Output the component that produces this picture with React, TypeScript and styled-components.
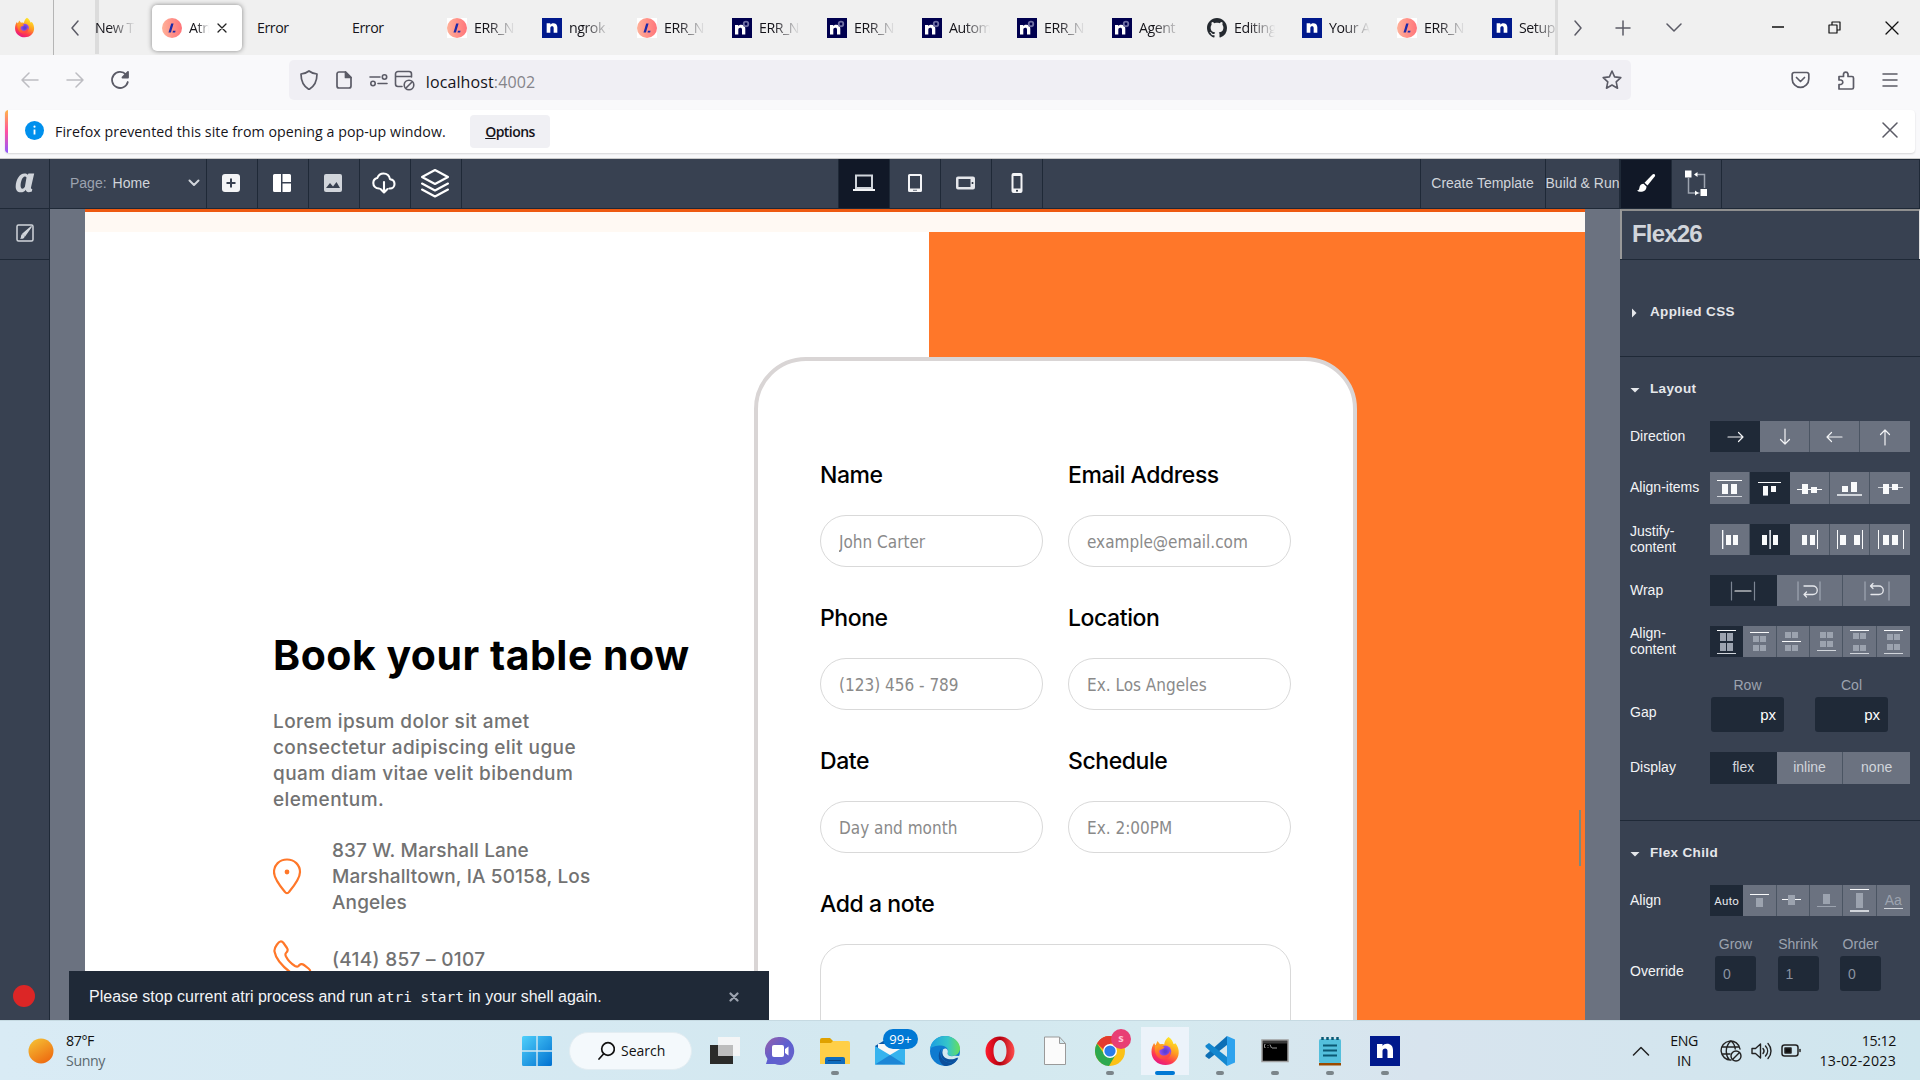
import React from "react";
import styled, { createGlobalStyle, css } from "styled-components";

const ui = `"Open Sans", "Noto Sans", sans-serif`;
const arial = `"Liberation Sans", Arial, sans-serif`;
const brand = `Inter, "Open Sans", sans-serif`;

const c = {
  bar: "#384151",
  line: "#1f2937",
  deep: "#111827",
  grey: "#6b7280",
  text: "#d1d5db",
  mute: "#9ca3af",
  orange: "#ff7729",
  body: "#727272",
};

const GlobalStyle = createGlobalStyle`
  * { box-sizing: border-box; }
  body { margin: 0; overflow: hidden; background: #fff; }
  svg { display: block; flex: none; }
`;

const Screen = styled.div`
  width: 1920px;
  height: 1080px;
  display: flex;
  flex-direction: column;
  overflow: hidden;
  font-family: ${arial};
`;

/* ---------- browser chrome ---------- */
const TabBar = styled.div`
  height: 55px;
  flex: none;
  display: flex;
  background: #f0f0f0;
  font-family: ${ui};
  color: #15141a;
`;
const Cell = styled.div<{ $w: number; $line?: string; $pr?: number }>`
  width: ${(p) => p.$w}px;
  flex: none;
  display: flex;
  align-items: center;
  justify-content: center;
  padding-right: ${(p) => p.$pr ?? 0}px;
  ${(p) => p.$line && css`border-right: 1px solid ${p.$line};`}
`;
const TabStrip = styled.div`
  width: 1464px;
  display: flex;
  gap: 5px;
  align-items: center;
  overflow: hidden;
  background: linear-gradient(#dcdcdc, #dcdcdc) 0 0 / 4px 54px no-repeat;
  border-right: 3px solid #dcdcdc;
`;
const Tab = styled.div<{ $active?: boolean; $w?: number }>`
  width: ${(p) => p.$w ?? 90}px;
  height: 46px;
  flex: none;
  display: flex;
  align-items: center;
  gap: 7px;
  padding-left: ${(p) => (p.$w ? 0 : 10)}px;
  border-radius: 5px;
  ${(p) => p.$active && css`background: #fff; box-shadow: 0 0 5px rgba(0, 0, 0, 0.45);`}
`;
const TabLabel = styled.span<{ $w: number; $fade?: boolean }>`
  width: ${(p) => p.$w}px;
  padding-top: 1px;
  overflow: hidden;
  white-space: nowrap;
  font-size: 14.2px;
  letter-spacing: -0.45px;
  line-height: 20px;
  ${(p) => p.$fade && css`mask-image: linear-gradient(90deg, #000 35%, transparent 98%);`}
`;
const NavBar = styled.div`
  height: 55px;
  flex: none;
  display: flex;
  padding: 5px 0 10px 7px;
  background: #f9f9fb;
`;
const UrlBar = styled.div`
  width: 1342px;
  height: 40px;
  margin: 0 146px 0 147px;
  flex: none;
  display: flex;
  align-items: center;
  border-radius: 5px;
  background: #f0eff4;
  padding-left: 2px;
`;
const Url = styled.span`
  flex: 1;
  padding: 3px 0 0 12px;
  font: 16px/22px ${ui};
  letter-spacing: 0.12px;
  color: #15141a;
`;
const Port = styled.span`
  color: #85848a;
`;
const NoticeArea = styled.div`
  height: 49px;
  flex: none;
  padding: 0 5px 5px;
  background: #f9f9fb;
  border-bottom: 1px solid #c9c9c9;
`;
const Notice = styled.div`
  height: 43px;
  display: flex;
  align-items: center;
  background: linear-gradient(#ffb545, #ff4fa0 50%, #9059ff) 0 0 / 3px 100% no-repeat #fff;
  border-radius: 4px;
  box-shadow: 0 1px 2px rgba(0, 0, 0, 0.14);
  padding: 0 0 1px 19px;
  font-family: ${ui};
  color: #15141a;
`;
const NoticeText = styled.span`
  width: 426px;
  padding: 1px 0 0 11px;
  font-size: 14.2px;
  letter-spacing: 0.06px;
  white-space: nowrap;
`;
const OptionsButton = styled.button`
  width: 80px;
  height: 33px;
  margin-right: auto;
  padding: 0;
  border: 0;
  border-radius: 4px;
  background: #f0f0f4;
  font: 600 14px ${ui};
  letter-spacing: -0.55px;
  color: #15141a;
`;

/* ---------- editor ---------- */
const Editor = styled.div`
  height: 861px;
  flex: none;
  display: flex;
  position: relative;
  background: ${c.bar};
`;
const Work = styled.div`
  width: 1620px;
  display: flex;
  flex-direction: column;
`;
const TopBar = styled.div`
  height: 50px;
  flex: none;
  display: flex;
  border-bottom: 1px solid ${c.line};
  color: ${c.text};
  font-size: 14px;
`;
const ToolCell = styled.div<{ $w?: number; $active?: boolean; $pr?: number }>`
  width: ${(p) => p.$w ?? 51}px;
  flex: none;
  display: flex;
  align-items: center;
  justify-content: center;
  padding: 0 ${(p) => p.$pr ?? 0}px 2px 0;
  white-space: nowrap;
  border-right: 1px solid ${c.line};
  background: ${(p) => (p.$active ? c.deep : "transparent")};
`;
const PageSelect = styled(ToolCell)`
  justify-content: flex-start;
  padding: 0 6px 2px 20px;
  gap: 6px;
`;
const Muted = styled.span`
  color: ${c.mute};
`;
const Grow = styled.span`
  flex: 1;
`;
const Spacer = styled.div<{ $w: number }>`
  width: ${(p) => p.$w}px;
  flex: none;
  border-right: 1px solid ${c.line};
`;
const Stage = styled.div`
  flex: 1;
  display: flex;
  min-height: 0;
`;
const Rail = styled.div`
  width: 50px;
  display: flex;
  flex-direction: column;
  align-items: center;
  justify-content: space-between;
  border-right: 1px solid ${c.line};
  padding-bottom: 13px;
`;
const RailTool = styled.div`
  width: 100%;
  height: 51px;
  display: flex;
  align-items: center;
  justify-content: center;
  padding-bottom: 2px;
  border-bottom: 1px solid ${c.line};
`;
const RecordDot = styled.div`
  width: 22px;
  height: 22px;
  margin-right: 1px;
  border-radius: 50%;
  background: #dc2626;
`;
const Canvas = styled.div`
  flex: 1;
  padding: 0 35px;
  background: ${c.grey};
`;
const SitePage = styled.div`
  height: 100%;
  overflow: hidden;
  border-top: 3px solid #ee5a10;
  background: #fff;
  position: relative;
`;
const Cream = styled.div`
  height: 20px;
  background: #fff9f3;
`;
const Booking = styled.div`
  height: 788px;
  display: flex;
  background: linear-gradient(90deg, #fff 844px, ${c.orange} 844px);
`;
const Intro = styled.div`
  width: 669px;
  flex: none;
  padding: 398px 0 0 188px;
  font-family: ${brand};
`;
const Title = styled.h1`
  margin: 0 0 29px;
  font-size: 41px;
  line-height: 50px;
  font-weight: 700;
  letter-spacing: 0.5px;
  white-space: nowrap;
  color: #000;
`;
const Copy = styled.p<{ $ls: number }>`
  margin: 0;
  font-size: 19px;
  line-height: 26px;
  font-weight: 500;
  letter-spacing: ${(p) => p.$ls}px;
  white-space: nowrap;
  color: ${c.body};
`;
const Contact = styled.div<{ $gap: number }>`
  display: grid;
  grid-template-columns: 59px 1fr;
  align-items: center;
  margin-top: ${(p) => p.$gap}px;
`;
const FormCard = styled.form`
  width: 603px;
  height: 760px;
  margin-top: 125px;
  flex: none;
  border: 4px solid #d9d5d5;
  border-radius: 52px;
  background: #fff;
  padding: 98px 62px 0;
  display: grid;
  grid-template-columns: 223px 223px;
  column-gap: 25px;
  row-gap: 35px;
  align-content: start;
`;
const Field = styled.label<{ $wide?: boolean }>`
  display: flex;
  flex-direction: column;
  gap: 24px;
  ${(p) => p.$wide && css`grid-column: 1 / 3;`}
`;
const FieldName = styled.span`
  font: 500 23px/32px ${brand};
  letter-spacing: -0.43px;
  color: #000;
`;
const Input = styled.input`
  width: 223px;
  height: 52px;
  padding: 2px 18px 1px;
  border: 1px solid #d9d9d9;
  border-radius: 26px;
  outline: 0;
  font-family: "DejaVu Sans Condensed", "DejaVu Sans", "Noto Sans", sans-serif;
  font-stretch: condensed;
  font-size: 17px;
  &::placeholder { color: #8a8a8a; opacity: 1; }
`;
const NoteBox = styled.div`
  height: 160px;
  border: 1px solid #d9d9d9;
  border-radius: 26px;
`;
const Marker = styled.div`
  position: absolute;
  left: 1494px;
  top: 598px;
  width: 2px;
  height: 56px;
  background: #738b86;
`;
const Toast = styled.div`
  position: absolute;
  left: 69px;
  bottom: 0;
  width: 700px;
  height: 49px;
  padding: 2px 30px 0 20px;
  display: flex;
  align-items: center;
  justify-content: space-between;
  background: ${c.line};
  color: #f3f4f6;
  font-size: 16px;
  white-space: pre;
`;
const Code = styled.code`
  font: 14.4px "DejaVu Sans Mono", monospace;
`;

/* ---------- properties panel ---------- */
const Panel = styled.div`
  width: 300px;
  display: flex;
  flex-direction: column;
  color: #f3f4f6;
  font-size: 14px;
`;
const PanelTabs = styled.div`
  height: 50px;
  flex: none;
  display: flex;
  border: 1px solid ${c.line};
`;
const NodeName = styled.div`
  height: 50px;
  flex: none;
  padding: 0 0 2px 10px;
  display: flex;
  align-items: center;
  border: 2px solid #999;
  border-top-color: #8f8f8f;
  border-right: 1px solid #ddd;
  border-bottom: 0;
  font-size: 24px;
  font-weight: 700;
  letter-spacing: -0.8px;
  color: ${c.text};
`;
const Section = styled.div<{ $h: number; $top: number }>`
  height: ${(p) => p.$h}px;
  flex: none;
  padding: ${(p) => p.$top}px 10px 0;
  border-top: 1px solid ${c.line};
`;
const SectionHead = styled.div`
  height: 20px;
  display: flex;
  align-items: center;
  gap: 10px;
  font-size: 13.5px;
  font-weight: 700;
  letter-spacing: 0.35px;
  color: #e5e7eb;
  & > svg { margin-top: 3px; }
`;
const Row = styled.div<{ $h?: number; $mt?: number }>`
  height: ${(p) => p.$h ?? 31}px;
  margin-top: ${(p) => p.$mt ?? 20}px;
  display: grid;
  grid-template-columns: 80px 200px;
  grid-template-rows: 100%;
  align-items: center;
  line-height: 16px;
`;
const RowLabel = styled.span<{ $top?: number }>`
  padding: ${(p) => p.$top ?? 0}px 0 2px;
`;
const Segments = styled.div<{ $n: number }>`
  height: 100%;
  display: grid;
  grid-template-columns: repeat(${(p) => p.$n}, minmax(0, 1fr));
`;
const Segment = styled.div<{ $on?: boolean; $last?: boolean }>`
  display: flex;
  align-items: center;
  justify-content: center;
  overflow: hidden;
  background: ${(p) => (p.$on ? c.line : c.grey)};
  border-right: ${(p) => (p.$on || p.$last ? 0 : 1)}px solid #4b5563;
  color: ${c.text};
  font-size: 14px;
`;
const AutoText = styled.span`
  font: 11.5px Roboto, ${arial};
  color: #e5e7eb;
  letter-spacing: 0.2px;
`;
const Underlined = styled.span`
  width: 19px;
  border-bottom: 1px solid ${c.text};
  color: ${c.mute};
  text-align: center;
  line-height: 15px;
`;
const NumCols = styled.div<{ $left: number; $gap: number }>`
  display: flex;
  gap: ${(p) => p.$gap}px;
  padding-left: ${(p) => p.$left}px;
`;
const NumCol = styled.div<{ $w: number }>`
  width: ${(p) => p.$w}px;
  display: flex;
  flex-direction: column;
  align-items: center;
  gap: 4px;
  color: ${c.mute};
`;
const NumBox = styled.div<{ $unit?: boolean }>`
  width: 100%;
  height: 35px;
  padding: ${(p) => (p.$unit ? "1px 8px 0 0" : "0 0 0 8px")};
  display: flex;
  align-items: center;
  justify-content: ${(p) => (p.$unit ? "flex-end" : "flex-start")};
  border-radius: 3px;
  background: ${c.line};
  color: ${(p) => (p.$unit ? "#fff" : "#8b93a1")};
  font-size: ${(p) => (p.$unit ? 15 : 14)}px;
`;

/* ---------- taskbar ---------- */
const Taskbar = styled.div`
  height: 60px;
  flex: none;
  display: flex;
  align-items: center;
  background: linear-gradient(90deg, #d9ebf5, #d3e8f0 45%, #d5eaf0 60%, #d8e4ee 74%, #cfe6ee);
  border-top: 1px solid #c6dae2;
  font-family: ${ui};
  color: #111;
`;
const Weather = styled.div`
  width: 509px;
  padding-left: 28px;
  display: flex;
  align-items: center;
  gap: 12px;
`;
const Stack = styled.div<{ $align?: string; $w?: number }>`
  display: flex;
  flex-direction: column;
  text-align: ${(p) => p.$align ?? "left"};
  width: ${(p) => (p.$w ? `${p.$w}px` : "auto")};
  font-size: 14.2px;
  line-height: 20px;
  letter-spacing: -0.4px;
`;
const DateText = styled.span`
  letter-spacing: 0.25px;
`;
const Soft = styled.span`
  color: #5b6870;
`;
const SearchPill = styled.div`
  width: 123px;
  height: 38px;
  margin: 0 5px 0 5px;
  display: flex;
  align-items: center;
  gap: 6px;
  padding-left: 28px;
  border-radius: 20px;
  background: #f4f9fc;
  border: 1px solid #e3edf2;
  font-size: 14px;
  letter-spacing: 0;
`;
const TaskItem = styled.div<{ $focus?: boolean }>`
  width: 55px;
  height: 48px;
  flex: none;
  position: relative;
  display: flex;
  align-items: center;
  justify-content: center;
  background: ${(p) => (p.$focus ? "linear-gradient(#ecf3fa,#ecf3fa) center / 48px 48px no-repeat" : "none")};
`;
const Indicator = styled.span<{ $focus?: boolean }>`
  position: absolute;
  bottom: 0;
  left: ${(p) => (p.$focus ? 17.5 : 23.5)}px;
  width: ${(p) => (p.$focus ? 20 : 8)}px;
  height: 4px;
  border-radius: 2px;
  background: ${(p) => (p.$focus ? "#0078d4" : "#7b858a")};
`;
const Badge = styled.span`
  position: absolute;
  left: 21px;
  top: 2px;
  width: 35px;
  height: 20px;
  border-radius: 10px;
  background: #0078d4;
  color: #fff;
  font-size: 13px;
  line-height: 20px;
  text-align: center;
`;
const Avatar = styled.span`
  position: absolute;
  left: 29px;
  top: 2px;
  width: 20px;
  height: 20px;
  border-radius: 50%;
  background: #e83e74;
  color: #ffc2d6;
  font-size: 11px;
  font-weight: 700;
  line-height: 18px;
  text-align: center;
`;
const Tray = styled.div`
  margin-left: auto;
  display: flex;
  align-items: center;
  padding-right: 24px;
`;

/* ---------- drawings ---------- */
type IconProps = { w: number; h?: number; vb?: string; color?: string; sw?: number; children: React.ReactNode };
const Icon = ({ w, h = w, vb, color = "#5b5b66", sw = 1.5, children }: IconProps) => (
  <svg width={w} height={h} viewBox={vb ?? `0 0 ${w} ${h}`} fill="none" stroke={color} strokeWidth={sw} strokeLinecap="round" strokeLinejoin="round">
    {children}
  </svg>
);

const Firefox = ({ size }: { size: number }) => (
  <svg width={size} height={size} viewBox="0 0 30 30">
    <defs>
      <linearGradient id="fxBody" x1="0.8" y1="0" x2="0.3" y2="1">
        <stop offset="0.1" stopColor="#ffe226" />
        <stop offset="0.45" stopColor="#ff9a22" />
        <stop offset="0.75" stopColor="#ff3a4f" />
        <stop offset="1" stopColor="#e31587" />
      </linearGradient>
      <linearGradient id="fxArm" x1="0" y1="0" x2="0.4" y2="1">
        <stop offset="0" stopColor="#ffae1e" />
        <stop offset="0.6" stopColor="#ff6a2e" />
        <stop offset="1" stopColor="#ff4548" />
      </linearGradient>
      <radialGradient id="fxGlobe">
        <stop offset="0.2" stopColor="#5b3fd6" />
        <stop offset="1" stopColor="#9a4ff0" />
      </radialGradient>
    </defs>
    <path d="M18.500 1c3 2 4.500 4.500 5 7 .9-.1 1.600-.4 2-.8 2.300 3 3.500 6.400 3.200 10C28.200 24.300 22.500 29 15.500 29 7.700 29 1.500 23.600 1.500 16c0-3.800 1-6.600 2.600-9l1.400 2.400L7.500 5l2.500 3.200c1.500-.4 3-.3 4.200.2C14.500 5.500 16 2.700 18.500 1z" fill="url(#fxBody)" />
    <circle cx="15.300" cy="15.500" r="6" fill="url(#fxGlobe)" />
    <path d="M5 10c3-1.500 7-1 9.500 1.500-1.500 2-3.500 1.500-5.500 3-.3 3.500 2.500 5.500 6 5 3-.5 4.500-2.500 4.800-4.500 2 4-1 8.500-6 8.500-6 0-9.800-5.500-8.800-13.500z" fill="url(#fxArm)" />
  </svg>
);

const LocalFav = () => (
  <svg width="20" height="20" viewBox="0 0 20 20">
    <defs>
      <linearGradient id="lf"><stop stopColor="#ffb199" /><stop offset="1" stopColor="#ff7479" /></linearGradient>
    </defs>
    <rect width="20" height="20" fill="#fff" />
    <circle cx="10" cy="10" r="10" fill="url(#lf)" />
    <path d="M9.200 5.500h2.400L8.900 14.500H6.500z" fill="#1b2aa8" />
    <path d="M11 12.700h2.600l-.5 1.800h-2.600z" fill="#1b2aa8" />
  </svg>
);
const NgrokMark = ({ size }: { size: number }) => (
  <svg width={size} height={size} viewBox="0 0 30 30">
    <rect width="30" height="30" fill="#00198c" />
    <path d="M7 8h5.500v2c1-1.500 2.500-2.300 4.500-2.300 3.700 0 6 2.300 6 6.300v8h-5.500v-7c0-1.700-.8-2.600-2.300-2.600-1.600 0-2.700 1-2.700 2.800V22H7z" fill="#fff" />
  </svg>
);
const AgentMark = () => (
  <svg width="20" height="20" viewBox="0 0 20 20">
    <rect width="20" height="20" fill="#00004f" />
    <path d="M3 7h3.300v1.200c.8-1 1.700-1.400 3-1.400 2.500 0 4 1.500 4 4V16.500H10v-5c0-1.200-.6-1.800-1.700-1.800-1.200 0-2 .8-2 2v4.800H3z" fill="#fff" />
    <circle cx="14" cy="6" r="2.300" fill="none" stroke="#6f6fa3" strokeWidth="1.800" />
  </svg>
);
const GithubMark = () => (
  <svg width="20" height="20" viewBox="0 0 16 16">
    <path fill="#24292f" d="M8 0C3.580 0 0 3.580 0 8c0 3.540 2.290 6.530 5.470 7.590.4.070.55-.17.55-.38 0-.19-.01-.82-.01-1.490-2.010.37-2.530-.49-2.690-.94-.09-.23-.48-.94-.82-1.130-.28-.15-.68-.52-.01-.53.63-.01 1.080.58 1.230.82.72 1.210 1.870.87 2.330.66.070-.52.28-.87.51-1.070-1.780-.2-3.640-.89-3.640-3.950 0-.87.31-1.590.82-2.150-.08-.2-.36-1.020.08-2.120 0 0 .67-.21 2.200.82.64-.18 1.320-.27 2-.27s1.360.09 2 .27c1.530-1.040 2.200-.82 2.200-.82.44 1.100.16 1.920.08 2.120.51.56.82 1.270.82 2.150 0 3.070-1.870 3.750-3.650 3.950.29.25.54.73.54 1.480 0 1.070-.01 1.930-.01 2.200 0 .21.15.46.55.38A8.010 8.010 0 0 0 16 8c0-4.420-3.580-8-8-8z" />
  </svg>
);

const tabs: [string, string][] = [
  ["l", "ERR_NG"], ["n", "ngrok -"], ["l", "ERR_NG"], ["a", "ERR_NG"], ["a", "ERR_NG"], ["a", "Automa"],
  ["a", "ERR_NG"], ["a", "Agent I"], ["g", "Editing"], ["n", "Your Au"], ["l", "ERR_NG"], ["n", "Setup"],
];
const favicon: Record<string, React.ReactNode> = {
  l: <LocalFav />,
  n: <NgrokMark size={20} />,
  a: <AgentMark />,
  g: <GithubMark />,
};

/* Bars and guide lines inside a layout option button: [x, y, width, height, tone] */
type Box = [number, number, number, number, string?];
const Glyph = ({ w, boxes }: { w: number; boxes: Box[] }) => (
  <svg width={w} height="31" viewBox={`0 0 ${w} 31`} shapeRendering="crispEdges">
    {boxes.map(([x, y, bw, bh, f], i) => (
      <rect key={i} x={x} y={y} width={bw} height={bh} fill={f ?? "#f9fafb"} />
    ))}
  </svg>
);
const D = "#9ca3af";
const L = "#d1d5db";

const alignItems: Box[][] = [
  [[7, 7, 25, 1], [7, 23, 25, 1, L], [12, 11, 6, 10], [21, 11, 6, 10]],
  [[8, 9, 23, 1], [13, 13, 5, 9], [13, 22, 5, 1, D], [21, 13, 5, 6]],
  [[7, 16, 25, 1], [12, 11, 6, 10], [21, 14, 6, 6]],
  [[7, 21, 25, 2, L], [12, 13, 6, 6], [21, 9, 6, 10]],
  [[8, 14, 25, 1, L], [13, 11, 6, 10], [22, 11, 6, 6]],
];
const justify: Box[][] = [
  [[11, 6, 1, 19], [12, 6, 1, 19, D], [15, 11, 5, 10], [22, 11, 5, 10]],
  [[18, 6, 1, 19, D], [19, 6, 1, 19, L], [11, 11, 5, 10], [22, 11, 5, 10]],
  [[11, 11, 5, 10], [19, 11, 5, 10], [26, 6, 1, 19]],
  [[6, 6, 1, 19], [9, 11, 6, 10], [23, 11, 6, 10], [31, 6, 1, 19]],
  [[7, 6, 1, 19], [12, 11, 6, 10], [21, 11, 6, 10], [32, 6, 1, 19]],
];
const quad = (y1: number, y2: number, h = 6, x = 10): Box[] => [
  [x, y1, 6, h, D], [x + 7, y1, 6, h, D], [x, y2, 6, h, D], [x + 7, y2, 6, h, D],
];
const alignContent: Box[][] = [
  [[7, 4, 19, 1], [7, 27, 19, 1, L], ...quad(7, 17, 8)],
  [[7, 6, 19, 1], ...quad(10, 19)],
  [[6, 15, 19, 1], ...quad(6, 19, 6, 9)],
  [[7, 24, 19, 1, L], ...quad(6, 15)],
  [[7, 4, 19, 1], [7, 27, 19, 1, L], ...quad(7, 19)],
  [[7, 4, 19, 1], [7, 27, 19, 1, L], ...quad(8, 18)],
];
const alignSelf: Box[][] = [
  [[7, 9, 19, 1], [13, 13, 7, 9, D]],
  [[6, 14, 19, 1], [12, 10, 7, 10, D]],
  [[7, 21, 19, 1, D], [13, 9, 7, 10, D]],
  [[7, 4, 19, 1], [7, 25, 19, 2, L], [13, 8, 7, 15, D]],
];
const arrows = ["M5 12h15M15.500 7.500L20 12l-4.500 4.500", "M12 4v15M7.500 14.500L12 19l4.500-4.500", "M19 12H4M8.500 7.500L4 12l4.500 4.500", "M12 20V5M7.500 9.500L12 5l4.500 4.500"];

const GlyphRow = ({ label, sets, on, h, w }: { label: string; sets: Box[][]; on: number; h?: number; w: number }) => (
  <Row $h={h}>
    <RowLabel>{label}</RowLabel>
    <Segments $n={sets.length}>
      {sets.map((b, i) => (
        <Segment key={i} $on={i === on} $last={i === sets.length - 1}>
          <Glyph w={w} boxes={b} />
        </Segment>
      ))}
    </Segments>
  </Row>
);

const Caret = ({ open }: { open?: boolean }) => (
  <svg width="10" height="10" viewBox="0 0 10 10">
    <path d={open ? "M.5 3h9L5 7.500z" : "M2 .5l4.500 4.500L2 9.500z"} fill="#e5e7eb" />
  </svg>
);

const fields = [
  ["Name", "John Carter"], ["Email Address", "example@email.com"],
  ["Phone", "(123) 456 - 789"], ["Location", "Ex. Los Angeles"],
  ["Date", "Day and month"], ["Schedule", "Ex. 2:00PM"],
];

const BrowserChrome = () => (
  <>
    <TabBar>
      <Cell $w={54} $line="#b5b5b5" $pr={4}><Firefox size={21} /></Cell>
      <Cell $w={41}><Icon w={10} h={18}><path d="M8 2L2 9l6 7" /></Icon></Cell>
      <TabStrip>
        <Tab $w={52}><TabLabel $w={41} $fade>New Ta</TabLabel></Tab>
        <Tab $active>
          <LocalFav />
          <TabLabel $w={21} $fade>Atri Ed</TabLabel>
          <Icon w={10} color="#222" sw={1.300}><path d="M1 1l8 8M9 1L1 9" /></Icon>
        </Tab>
        <Tab><TabLabel $w={70}>Error</TabLabel></Tab>
        <Tab><TabLabel $w={70}>Error</TabLabel></Tab>
        {tabs.map(([f, t], i) => (
          <Tab key={i}>{favicon[f]}<TabLabel $w={42} $fade>{t}</TabLabel></Tab>
        ))}
      </TabStrip>
      <Cell $w={40}><Icon w={10} h={18}><path d="M2 2l6 7-6 7" /></Icon></Cell>
      <Cell $w={50}><Icon w={16}><path d="M8 1v14M1 8h14" /></Icon></Cell>
      <Cell $w={101} $pr={50}><Icon w={16} h={10}><path d="M1 1l7 7 7-7" /></Icon></Cell>
      <Cell $w={57}><Icon w={12} h={12} color="#111" sw={1.300}><path d="M0 5h12" /></Icon></Cell>
      <Cell $w={57}><Icon w={13} color="#111" sw={1.200}><path d="M1 4h8v8H1zM4 4V1h8v8H9" /></Icon></Cell>
      <Cell $w={57}><Icon w={14} color="#111" sw={1.300}><path d="M1 1l12 12M13 1L1 13" /></Icon></Cell>
    </TabBar>
    <NavBar>
      <Cell $w={45}><Icon w={18} h={16} color="#bdbdc2"><path d="M17 8H1M8 1L1 8l7 7" /></Icon></Cell>
      <Cell $w={45}><Icon w={18} h={16} color="#bdbdc2"><path d="M1 8h16M10 1l7 7-7 7" /></Icon></Cell>
      <Cell $w={45}>
        <Icon w={20} sw={1.800}><path d="M17.800 12A8 8 0 1 1 16 4.600" /><path d="M18 2v5.500h-5.500z" fill="#5b5b66" /></Icon>
      </Cell>
      <UrlBar>
        <Cell $w={36}><Icon w={20} sw={1.700}><path d="M10 1c2 1.700 4.500 2.600 8 3 0 7-2 12-8 15.500C4 16 2 11 2 4c3.500-.4 6-1.300 8-3z" /></Icon></Cell>
        <Cell $w={34}><Icon w={16} h={18} sw={1.700}><path d="M3 1h6.500L15 6.500V15a2 2 0 0 1-2 2H3a2 2 0 0 1-2-2V3a2 2 0 0 1 2-2z" /><path d="M9.500 1v5.500H15z" fill="#5b5b66" /></Icon></Cell>
        <Cell $w={35}><Icon w={20} h={14} sw={1.600}><path d="M1 4h10M9 10.500h9" /><circle cx="15.500" cy="4" r="2.200" /><circle cx="4" cy="10.500" r="2.200" /></Icon></Cell>
        <Cell $w={16}><Icon w={21} sw={1.600}><path d="M8 16.500H4a2.500 2.500 0 0 1-2.500-2.500V4A2.500 2.500 0 0 1 4 1.500h11A2.500 2.500 0 0 1 17.500 4v3M2 6.500h15" /><circle cx="15" cy="15" r="4.800" /><path d="M12 18l6-6" /></Icon></Cell>
        <Url style={undefined}>&#8202;localhost<Port>:4002</Port></Url>
        <Cell $w={39}><Icon w={20} sw={1.600}><path d="M10 1l2.600 5.900 6.200.7-4.600 4.300 1.300 6.300L10 15l-5.500 3.200 1.300-6.300L1.200 7.600l6.200-.7z" /></Icon></Cell>
      </UrlBar>
      <Cell $w={46}><Icon w={19} h={18} sw={1.700}><path d="M3 1.500h13A1.800 1.800 0 0 1 17.800 3.300V8a8.300 8.300 0 0 1-16.600 0V3.300A1.800 1.800 0 0 1 3 1.500zM5.500 6.500l4 4 4-4" /></Icon></Cell>
      <Cell $w={45}><Icon w={18} h={20} sw={1.700}><path d="M2 6.500h4.500V4a2.300 2.300 0 0 1 4.500 0v2.500h4a1.500 1.500 0 0 1 1.500 1.500v9.500A1.500 1.500 0 0 1 15 19H2v-4.500h2a2.300 2.300 0 0 0 0-4.500H2z" /></Icon></Cell>
      <Cell $w={44}><Icon w={16}><path d="M1 2h14M1 8h14M1 14h14" /></Icon></Cell>
    </NavBar>
    <NoticeArea>
      <Notice>
        <svg width="20" height="20" viewBox="0 0 20 20"><circle cx="10.500" cy="9.500" r="9.500" fill="#0090ed" /><path d="M10.500 8.500v5" stroke="#fff" strokeWidth="1.800" /><circle cx="10.500" cy="5.700" r="1.100" fill="#fff" /></svg>
        <NoticeText>Firefox prevented this site from opening a pop-up window.</NoticeText>
        <OptionsButton><u>O</u>ptions</OptionsButton>
        <Cell $w={50}><Icon w={16} h={18}><path d="M1 1l14 14M15 1L1 15" /></Icon></Cell>
      </Notice>
    </NoticeArea>
  </>
);

const EditorTop = () => (
  <TopBar>
    <ToolCell $w={50}>
      <svg width="20" height="20" viewBox="0 0 20 20">
        <path fillRule="evenodd" fill={c.text} d="M13.500 0.500h5.700L16 14.500c-.2 1 .2 1.600 1.300 1.400l-.4 2.500c-3.600 1.500-6 .7-6-1.700-1.500 1.800-3.200 2.700-5.200 2.600C2.500 19.200.5 17 .7 13.200 1 6.500 4.500.5 9.500.4c1.500 0 2.500.4 3.200 1.300zM11.500 4.500c-.5-.8-1-1.100-1.700-1.100C7.500 3.500 5.600 8.500 5.600 12.500c0 2 .6 3.200 1.700 3.200 1 0 1.900-.7 2.600-2z" />
      </svg>
    </ToolCell>
    <PageSelect $w={157}>
      <Muted>Page:</Muted><span>Home</span><Grow />
      <Icon w={12} h={8} color={c.text} sw={2}><path d="M1.500 1.500L6 6l4.500-4.500" /></Icon>
    </PageSelect>
    <ToolCell $pr={2}>
      <svg width="18" height="18" viewBox="0 0 18 18"><rect width="18" height="18" rx="3" fill="#f3f4f6" /><path d="M9 4.500v9M4.500 9h9" stroke={c.bar} strokeWidth="2" /></svg>
    </ToolCell>
    <ToolCell $pr={2}>
      <svg width="18" height="18" viewBox="0 0 18 18" fill="#fff"><path d="M1.500 0H8v18H1.500A1.500 1.500 0 0 1 0 16.500v-15A1.500 1.500 0 0 1 1.500 0zM9.500 0h7A1.500 1.500 0 0 1 18 1.500V8H9.500zM9.500 9.500H18v7a1.500 1.500 0 0 1-1.500 1.500h-7z" /></svg>
    </ToolCell>
    <ToolCell $pr={2}>
      <svg width="18" height="18" viewBox="0 0 18 18"><rect width="18" height="18" rx="2" fill={c.text} /><path d="M2 14l4-5 3 3.500L12.500 8 16 14z" fill={c.bar} /></svg>
    </ToolCell>
    <ToolCell $pr={2}>
      <Icon w={24} h={22} color="#fff" sw={2.100}><path d="M7 16.500C3.500 16.500 1.300 14 1.300 11c0-2.800 2-4.500 4-5C6.300 3.200 8.700 1.500 11.500 1.500c3.500 0 6 2.500 6.500 5.700 2.700.3 4.500 2.200 4.500 4.700 0 2.600-2 4.600-4.500 4.600h-.5M12 10v10M8.500 17l3.500 3.500 3.500-3.500" /></Icon>
    </ToolCell>
    <ToolCell $pr={2}>
      <Icon w={30} color="#fff" sw={2.100}><path d="M15 2l13 7-13 7L2 9zM2 15.500l13 7 13-7M2 21.500l13 7 13-7" /></Icon>
    </ToolCell>
    <Spacer $w={377} />
    <ToolCell $active>
      <svg width="24" height="18" viewBox="0 0 24 18"><path d="M4 1.500h16v12.500H4z" fill="none" stroke="#d1d5db" strokeWidth="2" /><path d="M1 15h22v2H1z" fill="#f3f4f6" /></svg>
    </ToolCell>
    <ToolCell>
      <svg width="14" height="18" viewBox="0 0 14 18"><path fillRule="evenodd" d="M1.500 0h11A1.500 1.500 0 0 1 14 1.500v15a1.500 1.500 0 0 1-1.500 1.500h-11A1.500 1.500 0 0 1 0 16.500v-15A1.500 1.500 0 0 1 1.500 0zM2 2v12.500h10V2z" fill="#f3f4f6" /><path d="M5 16.300h4" stroke="#6b7280" /></svg>
    </ToolCell>
    <ToolCell $pr={1}>
      <svg width="19" height="14" viewBox="0 0 19 14"><path fillRule="evenodd" d="M2 0.500h15a2 2 0 0 1 2 2v9a2 2 0 0 1-2 2H2a2 2 0 0 1-2-2v-9a2 2 0 0 1 2-2zM2.500 3v8h12V3z" fill="#e5e7eb" /><circle cx="16.500" cy="7" r="1" fill="#1f2937" /></svg>
    </ToolCell>
    <ToolCell>
      <svg width="12" height="20" viewBox="0 0 12 20"><path fillRule="evenodd" d="M2.500 0h7A2 2 0 0 1 11.500 2v16a2 2 0 0 1-2 2h-7a2 2 0 0 1-2-2V2a2 2 0 0 1 2-2zM2.500 3v12.500h7V3z" fill="#f3f4f6" /><circle cx="6" cy="17.700" r="1" fill="#1f2937" /></svg>
    </ToolCell>
    <Spacer $w={378} />
    <ToolCell $w={125} $pr={1}>Create Template</ToolCell>
    <ToolCell $w={74}>Build &amp; Run</ToolCell>
  </TopBar>
);

const PropertiesPanel = () => (
  <Panel>
    <PanelTabs>
      <ToolCell $w={51} $active $pr={1}>
        <svg width="20" height="20" viewBox="0 0 20 20" fill="#fff"><path d="M18.500 1.300c.8.700.8 1.500.2 2.300L11.500 12.500 8.500 9.800 16.500 1.500c.6-.6 1.300-.8 2-.2z" /><path d="M7.600 10.800l2.900 2.600c0 3.500-2.500 5.600-6.500 5.400C2.800 18.700 1.800 18.300 1 17.500c1.700-.3 2.200-1.200 2.400-2.800.3-2.400 2-3.900 4.200-3.900z" /></svg>
      </ToolCell>
      <ToolCell $w={50} $pr={2}>
        <svg width="22" height="26" viewBox="0 0 22 26"><path d="M3.500 8v15h11M19.500 18V4.500h-9" fill="none" stroke="#9ca3af" strokeWidth="1.500" /><path d="M0 0.500h6.500v7H0zM15.500 19H22v7h-6.500zM9 4.500l3.500-2.500v5zM13.500 23L10 20.500v5z" fill="#fff" /></svg>
      </ToolCell>
    </PanelTabs>
    <NodeName>Flex26</NodeName>
    <Section $h={97} $top={41}><SectionHead><Caret />Applied CSS</SectionHead></Section>
    <Section $h={464} $top={21}>
      <SectionHead><Caret open />Layout</SectionHead>
      <Row $mt={23}>
        <RowLabel>Direction</RowLabel>
        <Segments $n={4}>
          {arrows.map((d, i) => (
            <Segment key={i} $on={i === 0} $last={i === 3}>
              <Icon w={24} color="#f3f4f6" sw={1.200}><path d={d} /></Icon>
            </Segment>
          ))}
        </Segments>
      </Row>
      <GlyphRow label="Align-items" sets={alignItems} on={1} h={32} w={40} />
      <GlyphRow label="Justify-content" sets={justify} on={1} w={38} />
      <Row>
        <RowLabel>Wrap</RowLabel>
        <Segments $n={3}>
          <Segment $on><Icon w={26} h={20} color="#d1d5db" sw={1.200}><path d="M1.500 1v18M24.500 1v18" stroke="#7d8694" /><path d="M5 10h16" stroke="#fff" /></Icon></Segment>
          <Segment><Icon w={24} h={20} color="#e5e7eb" sw={1.300}><path d="M1 1v18M23 1v18" stroke="#9ca3af" /><path d="M7 5h9a4 4 0 0 1 0 8.500H7M9.500 11L7 13.500 9.500 16" /></Icon></Segment>
          <Segment $last><Icon w={26} h={20} color="#e5e7eb" sw={1.300}><path d="M1 1v18M25 1v18" stroke="#9ca3af" /><path d="M7 13.500h8a4 4 0 0 0 0-8.500H7M9 2.500L6.500 5 9 7.500" /></Icon></Segment>
        </Segments>
      </Row>
      <GlyphRow label="Align-content" sets={alignContent} on={0} w={33} />
      <Row $h={55}>
        <RowLabel $top={16}>Gap</RowLabel>
        <NumCols $left={1} $gap={31}>
          <NumCol $w={73}>Row<NumBox $unit>px</NumBox></NumCol>
          <NumCol $w={73}>Col<NumBox $unit>px</NumBox></NumCol>
        </NumCols>
      </Row>
      <Row $h={32}>
        <RowLabel>Display</RowLabel>
        <Segments $n={3}>
          <Segment $on><RowLabel>flex</RowLabel></Segment>
          <Segment><RowLabel>inline</RowLabel></Segment>
          <Segment $last><RowLabel>none</RowLabel></Segment>
        </Segments>
      </Row>
    </Section>
    <Section $h={200} $top={21}>
      <SectionHead><Caret open />Flex Child</SectionHead>
      <Row $mt={23}>
        <RowLabel>Align</RowLabel>
        <Segments $n={6}>
          <Segment $on><AutoText>Auto</AutoText></Segment>
          {alignSelf.map((b, i) => <Segment key={i}><Glyph w={33} boxes={b} /></Segment>)}
          <Segment $last><Underlined>Aa</Underlined></Segment>
        </Segments>
      </Row>
      <Row $h={55}>
        <RowLabel $top={16}>Override</RowLabel>
        <NumCols $left={5} $gap={21.500}>
          <NumCol $w={41}>Grow<NumBox>0</NumBox></NumCol>
          <NumCol $w={41}>Shrink<NumBox>1</NumBox></NumCol>
          <NumCol $w={41}>Order<NumBox>0</NumBox></NumCol>
        </NumCols>
      </Row>
    </Section>
  </Panel>
);

const taskIcons: { art: React.ReactNode; run?: boolean; focus?: boolean; extra?: React.ReactNode }[] = [
  { art: <><path d="M0 9h23v19H0z" fill="#2b2b2a" /><path d="M8 1h22v19H8z" fill="#f6f6f6" opacity=".95" /><path d="M8 9h15v11H8z" fill="#bdbdbd" /></> },
  { art: <><defs><linearGradient id="tm" x1="0" x2="1" y1="0" y2="1"><stop stopColor="#9a5fa8" /><stop offset=".5" stopColor="#5d5fd0" /><stop offset="1" stopColor="#6a63c8" /></linearGradient></defs><path d="M15 1a14 14 0 1 1-5 27H1l1.500-5A14 14 0 0 1 15 1z" fill="url(#tm)" /><rect x="7" y="9" width="12" height="12" rx="2" fill="#fff" /><path d="M20 13l3.500-2.500v9L20 17z" fill="#fff" /></> },
  { run: true, art: <><path d="M0 4a2 2 0 0 1 2-2h8l3 3v6H0z" fill="#e0a100" /><path d="M0 7h11l2-2h15a2 2 0 0 1 2 2v21H0z" fill="#ffcf48" /><path d="M5 28v-5a2 2 0 0 1 2-2h16a2 2 0 0 1 2 2v5z" fill="#0f6cbd" /><path d="M8 24.500h13" stroke="#0a4480" /></> },
  { art: <><path d="M0 10L15 1l15 9v18H0z" fill="#0c56a5" /><path d="M3 8h24v12H3z" fill="#f7f7f7" /><path d="M0 10l15 9 15-9v18.500H0z" fill="#36b3ee" /><path d="M0 28.500L15 19l15 9.500z" fill="#1c86d6" /></>, extra: <Badge>99+</Badge> },
  { art: <><defs><linearGradient id="eg"><stop stopColor="#1b9de2" /><stop offset=".6" stopColor="#35c6c9" /><stop offset="1" stopColor="#67df5b" /></linearGradient></defs><circle cx="15" cy="15" r="15" fill="#0f7bd0" /><path d="M0 13C1 5 7.500 0 15 0c8.500 0 15 6 15 12.500 0 4.500-3.500 7.500-8 7.500-3 0-4.500-1-4.500-2.500 2-4-1.500-8-6.500-8C6 9.500 1.500 11 0 13z" fill="url(#eg)" /><path d="M12 12c-2 3-2.500 8 1 11.500 4 4 10 4 14.500 0C24.500 28 20 30 15 30 9 28 6 18 12 12z" fill="#0b4f9c" /><path d="M13 13.500c3-2.500 6 .500 4.500 4 0 2 3 3.500 7.500 2.300l5 .2-2.500 3.500c-5 2.500-10 1.500-12.500-1-3-3-3.500-6.500-2-9z" fill="#d3e9f0" /><path d="M13 13.500c-1.500 3-.5 6.500 2.500 8.500 3 1.800 7.500 2 12-.5l.5 1.500C24 27 18 27.500 14 24c-3.500-3-3.500-8-1-10.500z" fill="#0b4f9c" /></> },
  { art: <><defs><linearGradient id="op"><stop stopColor="#ff1b2d" /><stop offset=".5" stopColor="#b3000f" /><stop offset="1" stopColor="#ff4d4d" /></linearGradient></defs><path fillRule="evenodd" d="M15 .500a14.500 14.500 0 1 0 0 29 14.500 14.500 0 0 0 0-29zM15 4c4 0 6.500 5 6.500 11S19 26 15 26 8.500 21 8.500 15 11 4 15 4z" fill="url(#op)" /></> },
  { art: <path d="M4.500 1h15l6 6.500v21h-21zM19.500 1v6.500h6" fill="#fbfbfb" stroke="#9a9a9a" /> },
  { run: true, art: <><circle cx="15" cy="15" r="15" fill="#fbc116" /><path d="M2 7.500A15 15 0 0 1 28 7.500H15z" fill="#e33b2e" /><path d="M2 7.500A15 15 0 0 0 14 30l6.500-11-11-.5z" fill="#2da94f" /><path d="M2 7.500A15 15 0 0 1 15 0v8l-6 6z" fill="#e33b2e" /><circle cx="15" cy="15" r="7" fill="#fff" /><circle cx="15" cy="15" r="5.600" fill="#2b7de9" /></>, extra: <Avatar>s</Avatar> },
  { run: true, focus: true, art: <Firefox size={30} /> },
  { run: true, art: <><path d="M22 0L30 3.500v23L22 30z" fill="#2ea3ee" /><path d="M22 0v9L4 23 .500 20.500V19z" fill="#0d6fb5" /><path d="M22 30v-9L4 7 .500 9.500V11z" fill="#1387cf" /></> },
  { run: true, art: <><rect x="2" y="4" width="26" height="21.500" fill="#000" stroke="#9f9f9f" strokeWidth="1.500" /><path d="M3 5h24v2.500H3z" fill="#3a3a3a" /><path d="M5.500 8.500H4.500v3h1M8 9v.8M8 11v.8M10 8.500l1.500 3.500M12 12h5" stroke="#bbb" strokeWidth=".8" fill="none" /></> },
  { run: true, art: <><rect x="4" y="3" width="22" height="24" rx="1.500" fill="#53bfdc" /><path d="M4 27h22v2.500H4z" fill="#9a4a00" /><path d="M8 9.500h14M8 14.500h14M8 19.500h14" stroke="#0b5873" strokeWidth="1.800" /><path d="M7.500 1v3M12.500 1v3M17.500 1v3M22.500 1v3" stroke="#0b5873" strokeWidth="2.500" /></> },
  { run: true, art: <NgrokMark size={30} /> },
];

const TaskbarView = () => (
  <Taskbar>
    <Weather>
      <svg width="26" height="26" viewBox="0 0 26 26"><defs><linearGradient id="sun" x1="0.1" y1="0" x2="0.700" y2="1"><stop stopColor="#f5c235" /><stop offset="1" stopColor="#ee6a10" /></linearGradient></defs><circle cx="13" cy="13" r="12.500" fill="url(#sun)" /></svg>
      <Stack><span>87°F</span><Soft>Sunny</Soft></Stack>
    </Weather>
    <TaskItem>
      <svg width="30" height="30" viewBox="0 0 30 30"><defs><linearGradient id="win" x1="0" y1="0" x2="1" y2="1"><stop stopColor="#4fd0fb" /><stop offset="1" stopColor="#0070d0" /></linearGradient></defs><path d="M0 1.500Q0 0 1.500 0H14.300v14.300H0zM15.700 0H28.500Q30 0 30 1.500V14.300H15.700zM0 15.700h14.300V30H1.500Q0 30 0 28.500zM15.700 15.700H30V28.500Q30 30 28.500 30H15.700z" fill="url(#win)" /></svg>
    </TaskItem>
    <SearchPill>
      <Icon w={17} h={20} color="#111" sw={1.700}><circle cx="10" cy="8" r="6.300" /><path d="M5.500 13L1 18" /></Icon>
      Search
    </SearchPill>
    {taskIcons.map((t, i) => (
      <TaskItem key={i} $focus={t.focus}>
        <svg width="30" height="30" viewBox="0 0 30 30">{t.art}</svg>
        {t.run && <Indicator $focus={t.focus} />}
        {t.extra}
      </TaskItem>
    ))}
    <Tray>
      <Cell $w={36}><Icon w={18} h={10} color="#222"><path d="M1.500 9L9 1.500 16.500 9" /></Icon></Cell>
      <Stack $align="center" $w={50}><span>ENG</span><span>IN</span></Stack>
      <Cell $w={44}><Icon w={22} color="#222" sw={1.400}><path d="M11 20A9.500 9.500 0 1 1 20 9M2 7h17M2 14h8M11 1C5 6 5 15 9.500 20M11 1c2.500 2 4 5 4.200 8" /><circle cx="16" cy="16" r="5" /><path d="M12.500 19.500l7-7" /></Icon></Cell>
      <Cell $w={16}><Icon w={21} h={18} color="#222" sw={1.400}><path d="M1 6.500h3.500L9.500 2v14L4.500 11.500H1zM12 6.500c1.300 1.500 1.300 3.500 0 5M14.500 4c2.800 3 2.800 7 0 10M17 1.500c4 4.500 4 10.500 0 15" /></Icon></Cell>
      <Cell $w={44}><Icon w={21} h={13} color="#222" sw={1.500}><rect x="1" y="1" width="16" height="11" rx="2.500" /><path d="M4 4h6v5H4z" fill="#111" /><path d="M19 5.500v2" /></Icon></Cell>
      <Stack $align="right" $w={83}><span>15:12</span><DateText>13-02-2023</DateText></Stack>
    </Tray>
  </Taskbar>
);

export default function App() {
  return (
    <Screen>
      <GlobalStyle />
      <BrowserChrome />
      <Editor>
        <Work>
          <EditorTop />
          <Stage>
            <Rail>
              <RailTool>
                <svg width="18" height="18" viewBox="0 0 18 18"><rect x="1" y="1" width="16" height="16" rx="1.500" fill="none" stroke={c.text} strokeWidth="1.500" /><path d="M15.500 2.500L9 11.500 7 9.800z" fill={c.text} stroke={c.text} strokeWidth="1.200" /><path d="M6.500 10l2.300 2.200c-.3 2-2 2.900-4.800 2.500.8-.6 1-1.500 1-2.400.1-1.200.7-2.200 1.500-2.300z" fill={c.text} /></svg>
              </RailTool>
              <RecordDot />
            </Rail>
            <Canvas>
              <SitePage>
                <Cream />
                <Booking>
                  <Intro>
                    <Title>Book your table now</Title>
                    <Copy $ls={0.4}>
                      Lorem ipsum dolor sit amet<br />consectetur adipiscing elit ugue<br />quam diam vitae velit bibendum<br />elementum.
                    </Copy>
                    <Contact $gap={25}>
                      <Icon w={30} h={38} color={c.orange} sw={2.200}><path d="M14 1.500c7.500 0 13 5.500 13 12.500 0 5-3.500 11-11 20-1 1.500-3 1.500-4 0C4.500 25 1 19 1 14 1 7 6.500 1.500 14 1.500z" /><circle cx="14" cy="14" r="1.300" fill={c.orange} /></Icon>
                      <Copy $ls={0.12}>837 W. Marshall Lane<br />Marshalltown, IA 50158, Los<br />Angeles</Copy>
                    </Contact>
                    <Contact $gap={24}>
                      <Icon w={40} color={c.orange} sw={2.200}><path d="M4 4.500C6.500 1 8.500.5 10.500 3l3.500 5c1.300 2 .7 3.500-1 5-1 1-.7 2 0 3.500 2 4 5 7 9 9.500 1.500.8 2.500 1 3.500 0 1.500-2 3.500-2.500 5.500-1l4.500 3.500c2.500 2 2.500 4-1 7-3.500 2.500-9 3-17-3C8.500 25.500 2.500 17.500 1.500 11.500 1 8.500 2.500 6.500 4 4.500z" /></Icon>
                      <Copy $ls={0.3}>(414) 857 – 0107</Copy>
                    </Contact>
                  </Intro>
                  <FormCard>
                    {fields.map(([n, p]) => (
                      <Field key={n}><FieldName>{n}</FieldName><Input placeholder={p} /></Field>
                    ))}
                    <Field $wide><FieldName>Add a note</FieldName><NoteBox /></Field>
                  </FormCard>
                </Booking>
                <Marker />
              </SitePage>
            </Canvas>
          </Stage>
        </Work>
        <PropertiesPanel />
        <Toast>
          <span>Please stop current atri process and run <Code>atri start</Code> in your shell again.</span>
          <Icon w={10} color={c.mute} sw={2.200}><path d="M1.500 1.500l7 7M8.500 1.500l-7 7" /></Icon>
        </Toast>
      </Editor>
      <TaskbarView />
    </Screen>
  );
}
